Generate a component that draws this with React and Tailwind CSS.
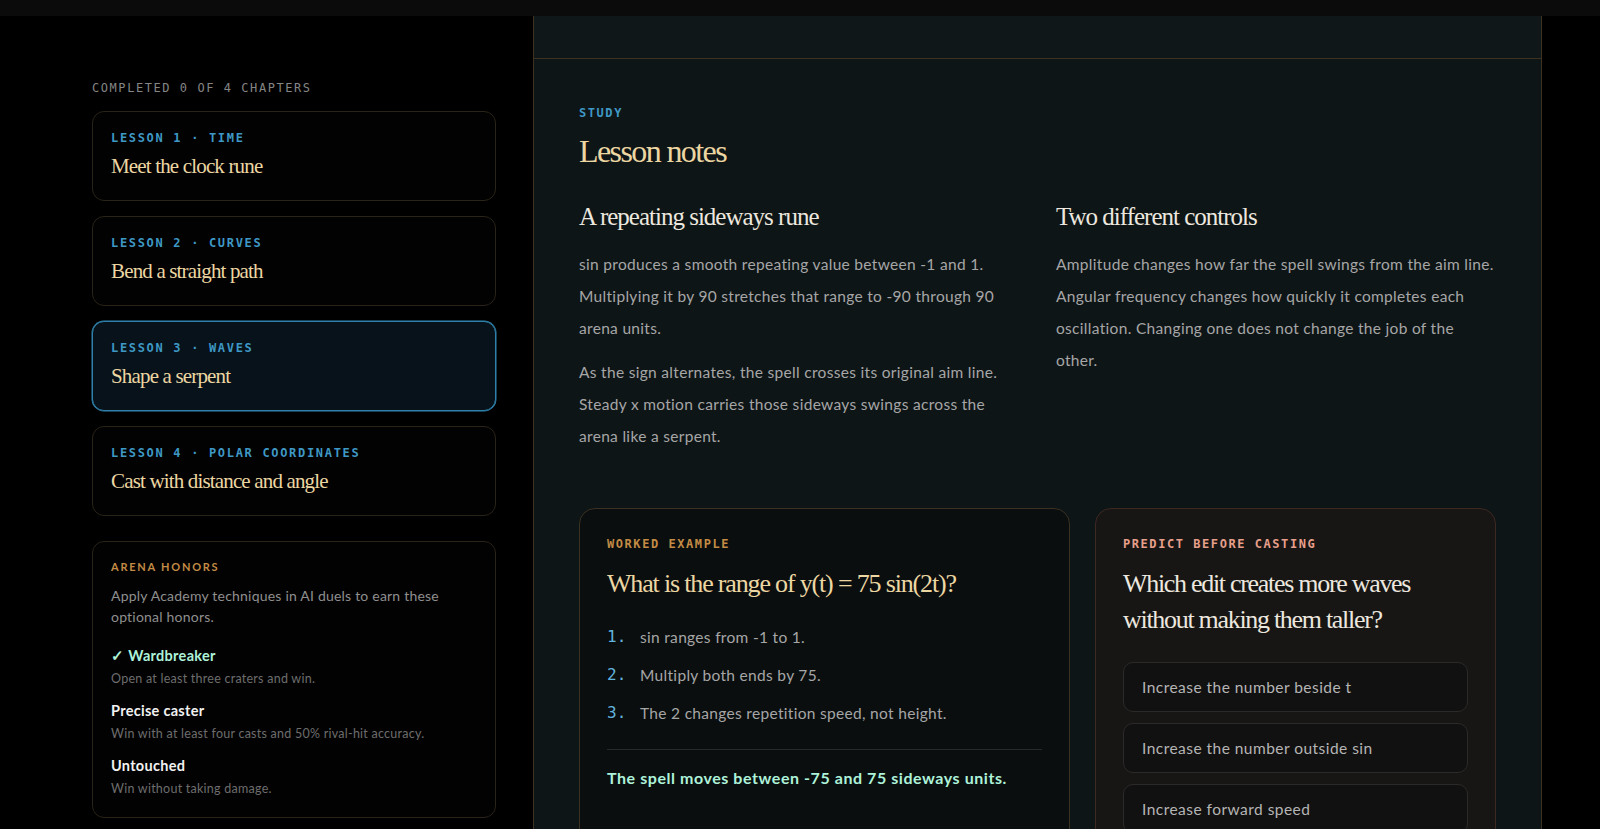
import React from 'react';

const lessons = [
  { id: 1, tag: 'Time', title: 'Meet the clock rune' },
  { id: 2, tag: 'Curves', title: 'Bend a straight path' },
  { id: 3, tag: 'Waves', title: 'Shape a serpent', active: true },
  { id: 4, tag: 'Polar coordinates', title: 'Cast with distance and angle' },
];

const honors = [
  { name: 'Wardbreaker', desc: 'Open at least three craters and win.', earned: true },
  { name: 'Precise caster', desc: 'Win with at least four casts and 50% rival-hit accuracy.' },
  { name: 'Untouched', desc: 'Win without taking damage.' },
];

const steps = [
  'sin ranges from -1 to 1.',
  'Multiply both ends by 75.',
  'The 2 changes repetition speed, not height.',
];

const options = [
  'Increase the number beside t',
  'Increase the number outside sin',
  'Increase forward speed',
];

const LessonCard = ({ lesson }) => (
  <div
    className={`rounded-xl border px-[18px] pt-[18px] pb-[20px] ${
      lesson.active
        ? 'border-[#2f81ab] bg-[#07121a] shadow-[0_0_0_0.5px_#2f81ab]'
        : 'border-[#2a2317] bg-[#020202]'
    }`}
  >
    <p className="font-['DejaVu_Sans_Mono',monospace] text-[12px] font-bold leading-4 tracking-[0.14em] uppercase text-[#3e98c5]">
      Lesson {lesson.id} · {lesson.tag}
    </p>
    <h3 className="mt-[6px] font-['Liberation_Serif',serif] text-[21px] leading-7 tracking-[-0.04em] text-[#ecd6a2]">
      {lesson.title}
    </h3>
  </div>
);

export default function App() {
  return (
    <div className="min-h-screen bg-black font-['Lato',sans-serif] text-[#a6a6a6]">
      {/* top strip */}
      <div className="h-4 bg-[#0b0b0b]" />

      <div className="flex items-stretch">
        {/* Sidebar */}
        <aside className="w-[533px] shrink-0 pl-[92px] pr-[37px] pt-16">
          <p className="font-['DejaVu_Sans_Mono',monospace] text-[12px] leading-4 tracking-[0.13em] uppercase text-[#858585]">
            Completed 0 of 4 chapters
          </p>

          <div className="mt-[15px] flex flex-col gap-[15px]">
            {lessons.map((l) => (
              <LessonCard key={l.id} lesson={l} />
            ))}
          </div>

          <section className="mt-[25px] rounded-xl border border-[#2a2317] bg-[#020202] px-[18px] pt-[17px] pb-[19px]">
            <p className="text-[11px] font-bold leading-4 tracking-[0.16em] uppercase text-[#c48b45]">
              Arena honors
            </p>
            <p className="mt-[10px] text-[14px] leading-[21px] tracking-[0.015em] text-[#8f8f8f]">
              Apply Academy techniques in AI duels to earn these optional honors.
            </p>
            <div className="mt-[19px] flex flex-col gap-[13px]">
              {honors.map((h) => (
                <div key={h.name}>
                  <p
                    className={`text-[14.5px] font-bold leading-5 tracking-[0.02em] ${
                      h.earned ? 'text-[#aef2da]' : 'text-[#f1f1f1]'
                    }`}
                  >
                    {h.earned && <span className="mr-1">✓</span>}
                    {h.name}
                  </p>
                  <p className="mt-1 text-[12.5px] leading-[18px] tracking-[0.02em] text-[#6d6d6d]">{h.desc}</p>
                </div>
              ))}
            </div>
          </section>
        </aside>

        {/* Main study panel */}
        <main className="w-[1009px] shrink-0 border-x border-[#3d3222] bg-[#0e1517]">
          <div className="h-[43px] border-b border-[#3d3222] bg-[#0f1719]" />

          <div className="px-[45px] pt-[46px] pb-10">
            <p className="font-['DejaVu_Sans_Mono',monospace] text-[12px] font-bold leading-4 tracking-[0.13em] uppercase text-[#3e98c5]">
              Study
            </p>
            <h1 className="mt-[10px] font-['Liberation_Serif',serif] text-[32px] leading-10 tracking-[-0.05em] text-[#ecd6a2]">
              Lesson notes
            </h1>

            <div className="mt-[30px] grid grid-cols-2 gap-[37px]">
              <div>
                <h2 className="font-['Liberation_Serif',serif] text-[25px] leading-8 tracking-[-0.04em] text-[#ece7df]">
                  A repeating sideways rune
                </h2>
                <p className="mt-[15px] text-[15.5px] leading-8 tracking-[0.02em]">
                  sin produces a smooth repeating value between -1 and 1. Multiplying it by 90 stretches that range to -90 through 90 arena units.
                </p>
                <p className="mt-[12px] text-[15.5px] leading-8 tracking-[0.02em]">
                  As the sign alternates, the spell crosses its original aim line. Steady x motion carries those sideways swings across the arena like a serpent.
                </p>
              </div>
              <div>
                <h2 className="font-['Liberation_Serif',serif] text-[25px] leading-8 tracking-[-0.04em] text-[#ece7df]">
                  Two different controls
                </h2>
                <p className="mt-[15px] text-[15.5px] leading-8 tracking-[0.02em]">
                  Amplitude changes how far the spell swings from the aim line. Angular frequency changes how quickly it completes each oscillation. Changing one does not change the job of the other.
                </p>
              </div>
            </div>

            <div className="mt-[56px] grid grid-cols-[491px_1fr] gap-[25px]">
              {/* Worked example */}
              <div className="rounded-2xl border border-[#3a3122] bg-[#0a0e0f] p-[27px]">
                <p className="font-['DejaVu_Sans_Mono',monospace] text-[12px] font-bold leading-4 tracking-[0.13em] uppercase text-[#c48b45]">
                  Worked example
                </p>
                <h3 className="mt-[14px] font-['Liberation_Serif',serif] text-[26px] leading-9 tracking-[-0.045em] text-[#ecd6a2]">
                  What is the range of y(t) = 75 sin(2t)?
                </h3>
                <ol className="mt-[23px] flex flex-col gap-[14px]">
                  {steps.map((s, i) => (
                    <li key={i} className="flex text-[15.5px] leading-6 tracking-[0.02em]">
                      <span className="w-[33px] shrink-0 font-['DejaVu_Sans_Mono',monospace] text-[16px] tracking-normal text-[#62b4de]">
                        {i + 1}.
                      </span>
                      <span>{s}</span>
                    </li>
                  ))}
                </ol>
                <div className="mt-6 h-px bg-[#262a2b]" />
                <p className="mt-[16px] text-[16px] font-bold leading-6 tracking-[0.035em] text-[#aef2da]">
                  The spell moves between -75 and 75 sideways units.
                </p>
              </div>

              {/* Predict */}
              <div className="rounded-2xl border border-[#3d2822] bg-[#171615] p-[27px]">
                <p className="font-['DejaVu_Sans_Mono',monospace] text-[12px] font-bold leading-4 tracking-[0.13em] uppercase text-[#e79f8a]">
                  Predict before casting
                </p>
                <h3 className="mt-[14px] font-['Liberation_Serif',serif] text-[26px] leading-9 tracking-[-0.05em] text-[#ece7df]">
                  Which edit creates more waves without making them taller?
                </h3>
                <div className="mt-6 flex flex-col gap-[11px]">
                  {options.map((o) => (
                    <button
                      key={o}
                      className="rounded-[10px] border border-[#2c2a29] bg-[#121111] px-[18px] py-[12px] text-left text-[15.5px] leading-6 tracking-[0.03em] text-[#b5b5b5]"
                    >
                      {o}
                    </button>
                  ))}
                </div>
              </div>
            </div>
          </div>
        </main>
      </div>
    </div>
  );
}
